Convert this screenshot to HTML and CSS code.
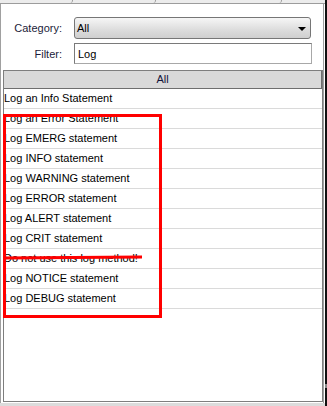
FILE: index.html
```html
<!DOCTYPE html>
<html lang="en">
<head>
    <meta charset="UTF-8">
    <title>Log Statements</title>
    <link rel="stylesheet" href="styles.css">
</head>
<body>
    <div class="window">
        <div class="main">
            <!-- Tab strip, only its lower edge shows -->
            <div class="tabbar">
                <div class="tab tab-a"></div>
                <div class="tab tab-b"></div>
                <div class="tab tab-c"></div>
                <div class="tab tab-d"></div>
            </div>

            <div class="page">
                <div class="filters">
                    <label class="field-label" for="category">Category:</label>
                    <div class="combo" id="category">
                        <span>All</span>
                        <span class="combo-arrow"></span>
                    </div>

                    <label class="field-label" for="filter">Filter:</label>
                    <input class="text-input" type="text" id="filter" value="Log">
                </div>

                <div class="list">
                    <div class="list-header">All</div>
                    <div class="list-row">Log an Info Statement</div>
                    <div class="list-row">Log an Error Statement</div>
                    <div class="list-row">Log EMERG statement</div>
                    <div class="list-row">Log INFO statement</div>
                    <div class="list-row">Log WARNING statement</div>
                    <div class="list-row">Log ERROR statement</div>
                    <div class="list-row">Log ALERT statement</div>
                    <div class="list-row">Log CRIT statement</div>
                    <div class="list-row">Do not use this log method!</div>
                    <div class="list-row">Log NOTICE statement</div>
                    <div class="list-row">Log DEBUG statement</div>

                    <!-- red annotation drawn over the list -->
                    <div class="mark-box"></div>
                    <div class="mark-strike"></div>
                </div>
            </div>
            <div class="bottom-strip"></div>
        </div>
        <div class="side-strip"><div class="side-grip"></div></div>
    </div>
</body>
</html>
```

FILE: styles.css
```css
body {
    margin: 0;
    background: #fff;
    font-family: "Liberation Sans", Arial, sans-serif;
    font-size: 11px;
    color: #000;
    overflow: hidden;
}

.window {
    display: flex;
    width: 327px;
    height: 406px;
}

.main {
    width: 325px;
    display: flex;
    flex-direction: column;
}

.side-strip {
    width: 2px;
    background: #111;
    position: relative;
}

.side-grip {
    position: absolute;
    top: 384px;
    left: 0;
    width: 2px;
    height: 4px;
    background: #888;
}

/* Tabs */
.tabbar {
    display: flex;
    height: 3px;
    background: #ececec;
    border-bottom: 1px solid #9c9c9c;
}

.tab {
    border-right: 1px solid #9c9c9c;
    border-bottom-right-radius: 3px;
    box-sizing: border-box;
}

.tab-a { width: 73px; }
.tab-b { width: 83px; }
.tab-c { width: 126px; }
.tab-d { flex: 1; border-right: none; }

/* Page */
.page {
    width: 324px;
    box-sizing: border-box;
    border-left: 1px solid #a0a0a0;
    border-right: 1px solid #a0a0a0;
    padding-top: 13px;
    display: flex;
    flex-direction: column;
    flex: 1;
}

.filters {
    display: grid;
    grid-template-columns: 61px 237px;
    column-gap: 12px;
    row-gap: 4px;
    align-items: center;
}

.field-label {
    text-align: right;
    color: #1c1c3a;
}

.combo {
    height: 22px;
    box-sizing: border-box;
    border: 1px solid #767676;
    border-radius: 3px;
    background: linear-gradient(#f6f6f6, #dcdcdc 60%, #cfcfcf);
    display: flex;
    align-items: center;
    justify-content: space-between;
    padding: 0 4px 0 2px;
}

.combo-arrow {
    width: 0;
    height: 0;
    border-left: 4px solid transparent;
    border-right: 4px solid transparent;
    border-top: 4px solid #000;
    margin-top: 1px;
}

.text-input {
    width: 238px;
    height: 21px;
    box-sizing: border-box;
    margin: 0;
    border: 1px solid #7a7a7a;
    border-right-color: #a8a8a8;
    border-bottom-color: #a8a8a8;
    padding: 0 3px;
    font-family: inherit;
    font-size: 11px;
    color: #000;
    outline: none;
}

/* List */
.list {
    position: relative;
    margin: 6px 0 0 2px;
    width: 320px;
    height: 332px;
    box-sizing: border-box;
    border: 1px solid #7e7e7e;
    background: #fff;
}

.list-header {
    height: 17px;
    line-height: 17px;
    background: #d9d9d9;
    border-bottom: 1px solid #6e6e6e;
    border-right: 1px solid #6e6e6e;
    text-align: center;
    color: #14143a;
}

.list-row {
    height: 19px;
    line-height: 19px;
    border-bottom: 1px solid #dadada;
    padding-left: 0;
    white-space: nowrap;
}

.mark-box {
    position: absolute;
    left: -1px;
    top: 43px;
    width: 159px;
    height: 204px;
    box-sizing: border-box;
    border: 3px solid #ff0000;
}

.mark-strike {
    position: absolute;
    left: 0;
    top: 185px;
    width: 138px;
    height: 3px;
    background: #ff0000;
    transform: rotate(-0.4deg);
}

.bottom-strip {
    height: 3px;
    background: #dcdcdc;
}
```
